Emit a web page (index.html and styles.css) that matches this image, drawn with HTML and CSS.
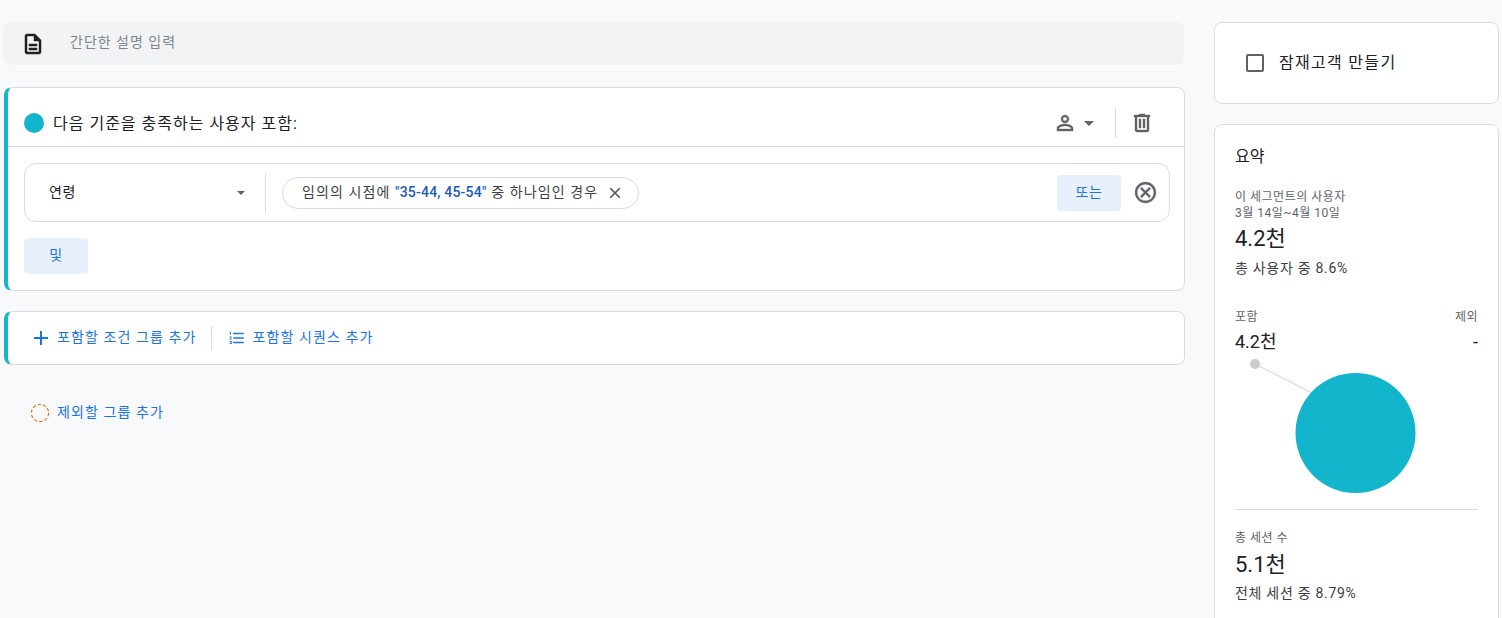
FILE: index.html
```html
<!DOCTYPE html>
<html lang="ko">
<head>
<meta charset="utf-8">
<title>세그먼트</title>
<link rel="stylesheet" href="styles.css">
</head>
<body>
<div class="page">
  <main class="main">
    <div class="desc">
      <svg class="desc-icon" viewBox="0 0 24 24" width="24" height="24"><path d="M14 2H6c-1.1 0-2 .9-2 2v16c0 1.1.9 2 2 2h12c1.1 0 2-.9 2-2V8l-6-6zm4 18H6V4h7v5h5v11zM8 12h8v2H8zm0 4h8v2H8z"/></svg>
      <span class="desc-text">간단한 설명 입력</span>
    </div>

    <section class="card group">
      <header class="group-head">
        <span class="dot"></span>
        <span class="group-title">다음 기준을 충족하는 사용자 포함:</span>
        <span class="head-tools">
          <svg class="ic" viewBox="0 0 24 24" width="24" height="24"><path d="M12 5.9a2.1 2.1 0 1 1 0 4.2 2.1 2.1 0 0 1 0-4.2m0 9c2.97 0 6.1 1.46 6.1 2.1v1.1H5.9V17c0-.64 3.13-2.1 6.1-2.1M12 4C9.79 4 8 5.79 8 8s1.79 4 4 4 4-1.79 4-4-1.79-4-4-4zm0 9c-2.67 0-8 1.34-8 4v3h16v-3c0-2.66-5.33-4-8-4z"/></svg>
          <span class="caret caret-head"></span>
          <span class="vline"></span>
          <svg class="ic" viewBox="0 0 24 24" width="24" height="24"><path d="M15 4V3H9v1H4v2h1v13c0 1.1.9 2 2 2h10c1.1 0 2-.9 2-2V6h1V4h-5zm2 15H7V6h10v13zM9 8h2v9H9zm4 0h2v9h-2z"/></svg>
        </span>
      </header>
      <div class="group-body">
        <div class="cond">
          <div class="cond-select">
            <span class="cond-name">연령</span>
            <span class="caret caret-small"></span>
          </div>
          <div class="chip">
            <span class="chip-text">임의의 시점에 <b>"35-44, 45-54"</b> 중 하나임인 경우</span>
            <svg class="ic" viewBox="0 0 24 24" width="18" height="18"><path d="M19 6.41 17.59 5 12 10.59 6.41 5 5 6.41 10.59 12 5 17.59 6.41 19 12 13.41 17.59 19 19 17.59 13.41 12z"/></svg>
          </div>
          <span class="btn btn-or">또는</span>
          <svg class="ic cancel" viewBox="0 0 24 24" width="25" height="25"><path d="M12 2C6.47 2 2 6.47 2 12s4.47 10 10 10 10-4.47 10-10S17.53 2 12 2zm0 18c-4.41 0-8-3.59-8-8s3.59-8 8-8 8 3.59 8 8-3.59 8-8 8zm3.59-13L12 10.59 8.41 7 7 8.41 10.59 12 7 15.59 8.41 17 12 13.41 15.59 17 17 15.59 13.41 12 17 8.41z"/></svg>
        </div>
        <span class="btn btn-and">및</span>
      </div>
    </section>

    <section class="card addbar">
      <span class="link">
        <svg class="plus" viewBox="0 0 24 24" width="24" height="24"><path fill="#1a73e8" d="M19 13h-6v6h-2v-6H5v-2h6V5h2v6h6v2z"/></svg>
        <span class="link-text">포함할 조건 그룹 추가</span>
      </span>
      <span class="vline vline-add"></span>
      <span class="link">
        <svg viewBox="0 0 24 24" width="18" height="18"><path fill="#1a73e8" d="M2 17h2v.5H3v1h1v.5H2v1h3v-4H2v1zm1-9h1V4H2v1h1v3zm-1 3h1.8L2 13.1v.9h3v-1H3.2L5 10.9V10H2v1zm5-6v2h14V5H7zm0 14h14v-2H7v2zm0-6h14v-2H7v2z"/></svg>
        <span class="link-text">포함할 시퀀스 추가</span>
      </span>
    </section>

    <div class="exclude">
      <svg class="dashed" viewBox="0 0 20 20" width="20" height="20"><circle cx="10" cy="10" r="8.6"/></svg>
      <span class="link"><span class="link-text">제외할 그룹 추가</span></span>
    </div>
  </main>

  <aside class="side">
    <div class="card audience">
      <span class="checkbox"></span>
      <span class="audience-text">잠재고객 만들기</span>
    </div>
    <div class="card summary">
      <h2 class="sum-title">요약</h2>
      <p class="small sum-label">이 세그먼트의 사용자</p>
      <p class="small">3월 14일~4월 10일</p>
      <p class="big">4.2천</p>
      <p class="note">총 사용자 중 8.6%</p>
      <div class="split split-labels">
        <span class="small">포함</span>
        <span class="small">제외</span>
      </div>
      <div class="split split-values">
        <span>4.2천</span>
        <span>-</span>
      </div>
      <svg class="pie" viewBox="0 0 243 135" width="243" height="135">
        <line x1="20" y1="0" x2="85" y2="33" stroke="#d2d2d2" stroke-width="1"/>
        <circle cx="20" cy="0" r="5" fill="#cccccc"/>
        <circle cx="120.5" cy="69" r="60" fill="#12b5cb"/>
      </svg>
      <div class="rule"></div>
      <p class="small sum-sessions">총 세션 수</p>
      <p class="big big-sessions">5.1천</p>
      <p class="note note-sessions">전체 세션 중 8.79%</p>
    </div>
  </aside>
</div>
</body>
</html>
```

FILE: styles.css
```css
* { box-sizing: border-box; }
html, body { margin: 0; height: 100%; overflow: hidden; }
body {
  background: #f8f9fa;
  color: #202124;
  font-family: Roboto, "Noto Sans CJK KR", sans-serif;
  font-size: 14px;
}
p, h2 { margin: 0; font-weight: 400; }

.page {
  display: flex;
  align-items: flex-start;
  gap: 29px;
  padding: 22px 3px 0 3px;
}
.main { width: 1182px; flex: none; }
.side { width: 285px; flex: none; display: flex; flex-direction: column; gap: 20px; }

.card {
  background: #fff;
  border: 1px solid #dadce0;
  border-radius: 8px;
}
.ic path { fill: #5f6368; stroke: #5f6368; stroke-width: .4; }

.desc {
  display: flex;
  align-items: center;
  height: 43px;
  margin: 0 1px 22px 0;
  background: #f1f3f4;
  border-radius: 8px;
  padding-left: 18px;
}
.desc-icon path { fill: #202124; stroke: #202124; stroke-width: .5; }
.desc-text {
  margin-left: 25px;
  padding-bottom: 6px;
  font-size: 14px;
  letter-spacing: 1px;
  color: #80868b;
}

.group {
  height: 204px;
  border-left: 4px solid #12b5cb;
  margin-left: 1px;
}
.group-head {
  display: flex;
  align-items: center;
  height: 59px;
  padding: 12px 30px 0 16px;
  border-bottom: 1px solid #dadce0;
}
.dot { width: 20px; height: 20px; border-radius: 50%; background: #12b5cb; }
.group-title {
  margin-left: 9px;
  padding-bottom: 2px;
  font-size: 16px;
  letter-spacing: 1px;
}
.head-tools { margin-left: auto; display: flex; align-items: center; }
.caret {
  display: inline-block;
  width: 0;
  height: 0;
  border-style: solid;
  border-color: #5f6368 transparent transparent;
}
.caret-head { border-width: 5px 5px 0; margin-left: 7px; }
.caret-small { border-width: 4px 4px 0; }
.vline { width: 1px; height: 30px; background: #dadce0; display: block; }
.head-tools .vline { margin: 0 14px 0 21px; }

.group-body { padding: 16px 14px 0 16px; }
.cond {
  display: flex;
  align-items: center;
  height: 59px;
  border: 1px solid #dadce0;
  border-radius: 12px;
  padding-right: 11px;
}
.cond-select {
  display: flex;
  align-items: center;
  justify-content: space-between;
  width: 241px;
  height: 40px;
  padding: 0 20px 0 24px;
  border-right: 1px solid #dadce0;
  font-size: 14px;
}
.cond-name { padding-bottom: 4px; letter-spacing: .5px; }
.chip {
  display: flex;
  align-items: center;
  gap: 8px;
  height: 32px;
  margin-left: 16px;
  padding: 0 14px 0 19px;
  border: 1px solid #dadce0;
  border-radius: 16px;
  font-size: 14px;
  letter-spacing: 1.1px;
  color: #3c4043;
}
.chip-text { padding-bottom: 4px; }
.chip b { font-weight: 500; color: #1a5cb8; letter-spacing: .2px; }
.btn {
  display: flex;
  align-items: center;
  justify-content: center;
  height: 36px;
  padding-bottom: 4px;
  background: #e8f0fe;
  border-radius: 4px;
  color: #1a73e8;
  font-size: 14px;
  letter-spacing: .5px;
}
.btn-or { width: 64px; margin-left: auto; }
.cancel { margin-left: 12px; }
.btn-and { width: 64px; margin-top: 16px; }

.addbar {
  display: flex;
  align-items: center;
  height: 54px;
  margin: 20px 0 0 1px;
  padding-left: 24px;
  border-left: 4px solid #12b5cb;
}
.link {
  display: inline-flex;
  align-items: center;
  gap: 7px;
  font-size: 14px;
  letter-spacing: 1.1px;
  color: #1a73e8;
}
.link-text { padding-bottom: 4px; }
.plus { margin: 0 -3px; }
.vline-add { height: 24px; margin: 0 16px 0 14px; }

.exclude {
  display: flex;
  align-items: center;
  gap: 7px;
  margin: 36px 0 0 27px;
}
.dashed circle {
  fill: none;
  stroke: #e8710a;
  stroke-width: 1.1;
  stroke-dasharray: 3.4 2;
}

.audience {
  display: flex;
  align-items: center;
  gap: 15px;
  height: 82px;
  padding-left: 31px;
  font-size: 16px;
}
.audience-text { padding-bottom: 4px; letter-spacing: 1.3px; }
.checkbox {
  width: 18px;
  height: 18px;
  border: 2px solid #5f6368;
  border-radius: 2px;
}

.summary { height: 520px; padding: 21px 20px 0 20px; }
.sum-title { font-size: 16px; line-height: 22px; }
.small { font-size: 12px; letter-spacing: .5px; color: #5f6368; line-height: 16px; }
.sum-label { margin-top: 21px; }
.big { font-size: 22px; line-height: 30px; margin-top: 3px; }
.note { font-size: 14px; letter-spacing: .7px; line-height: 18px; color: #3c4043; margin-top: 5px; }
.split { display: flex; justify-content: space-between; }
.split-labels { margin-top: 32px; }
.split-values { font-size: 18px; line-height: 24px; margin-top: 5px; }
.pie { display: block; margin-top: 10px; overflow: visible; }
.rule { height: 1px; background: #dadce0; margin-top: 10px; }
.sum-sessions { margin-top: 20px; }
.big-sessions { margin-top: 4px; }
.note-sessions { margin-top: 4px; }
```
